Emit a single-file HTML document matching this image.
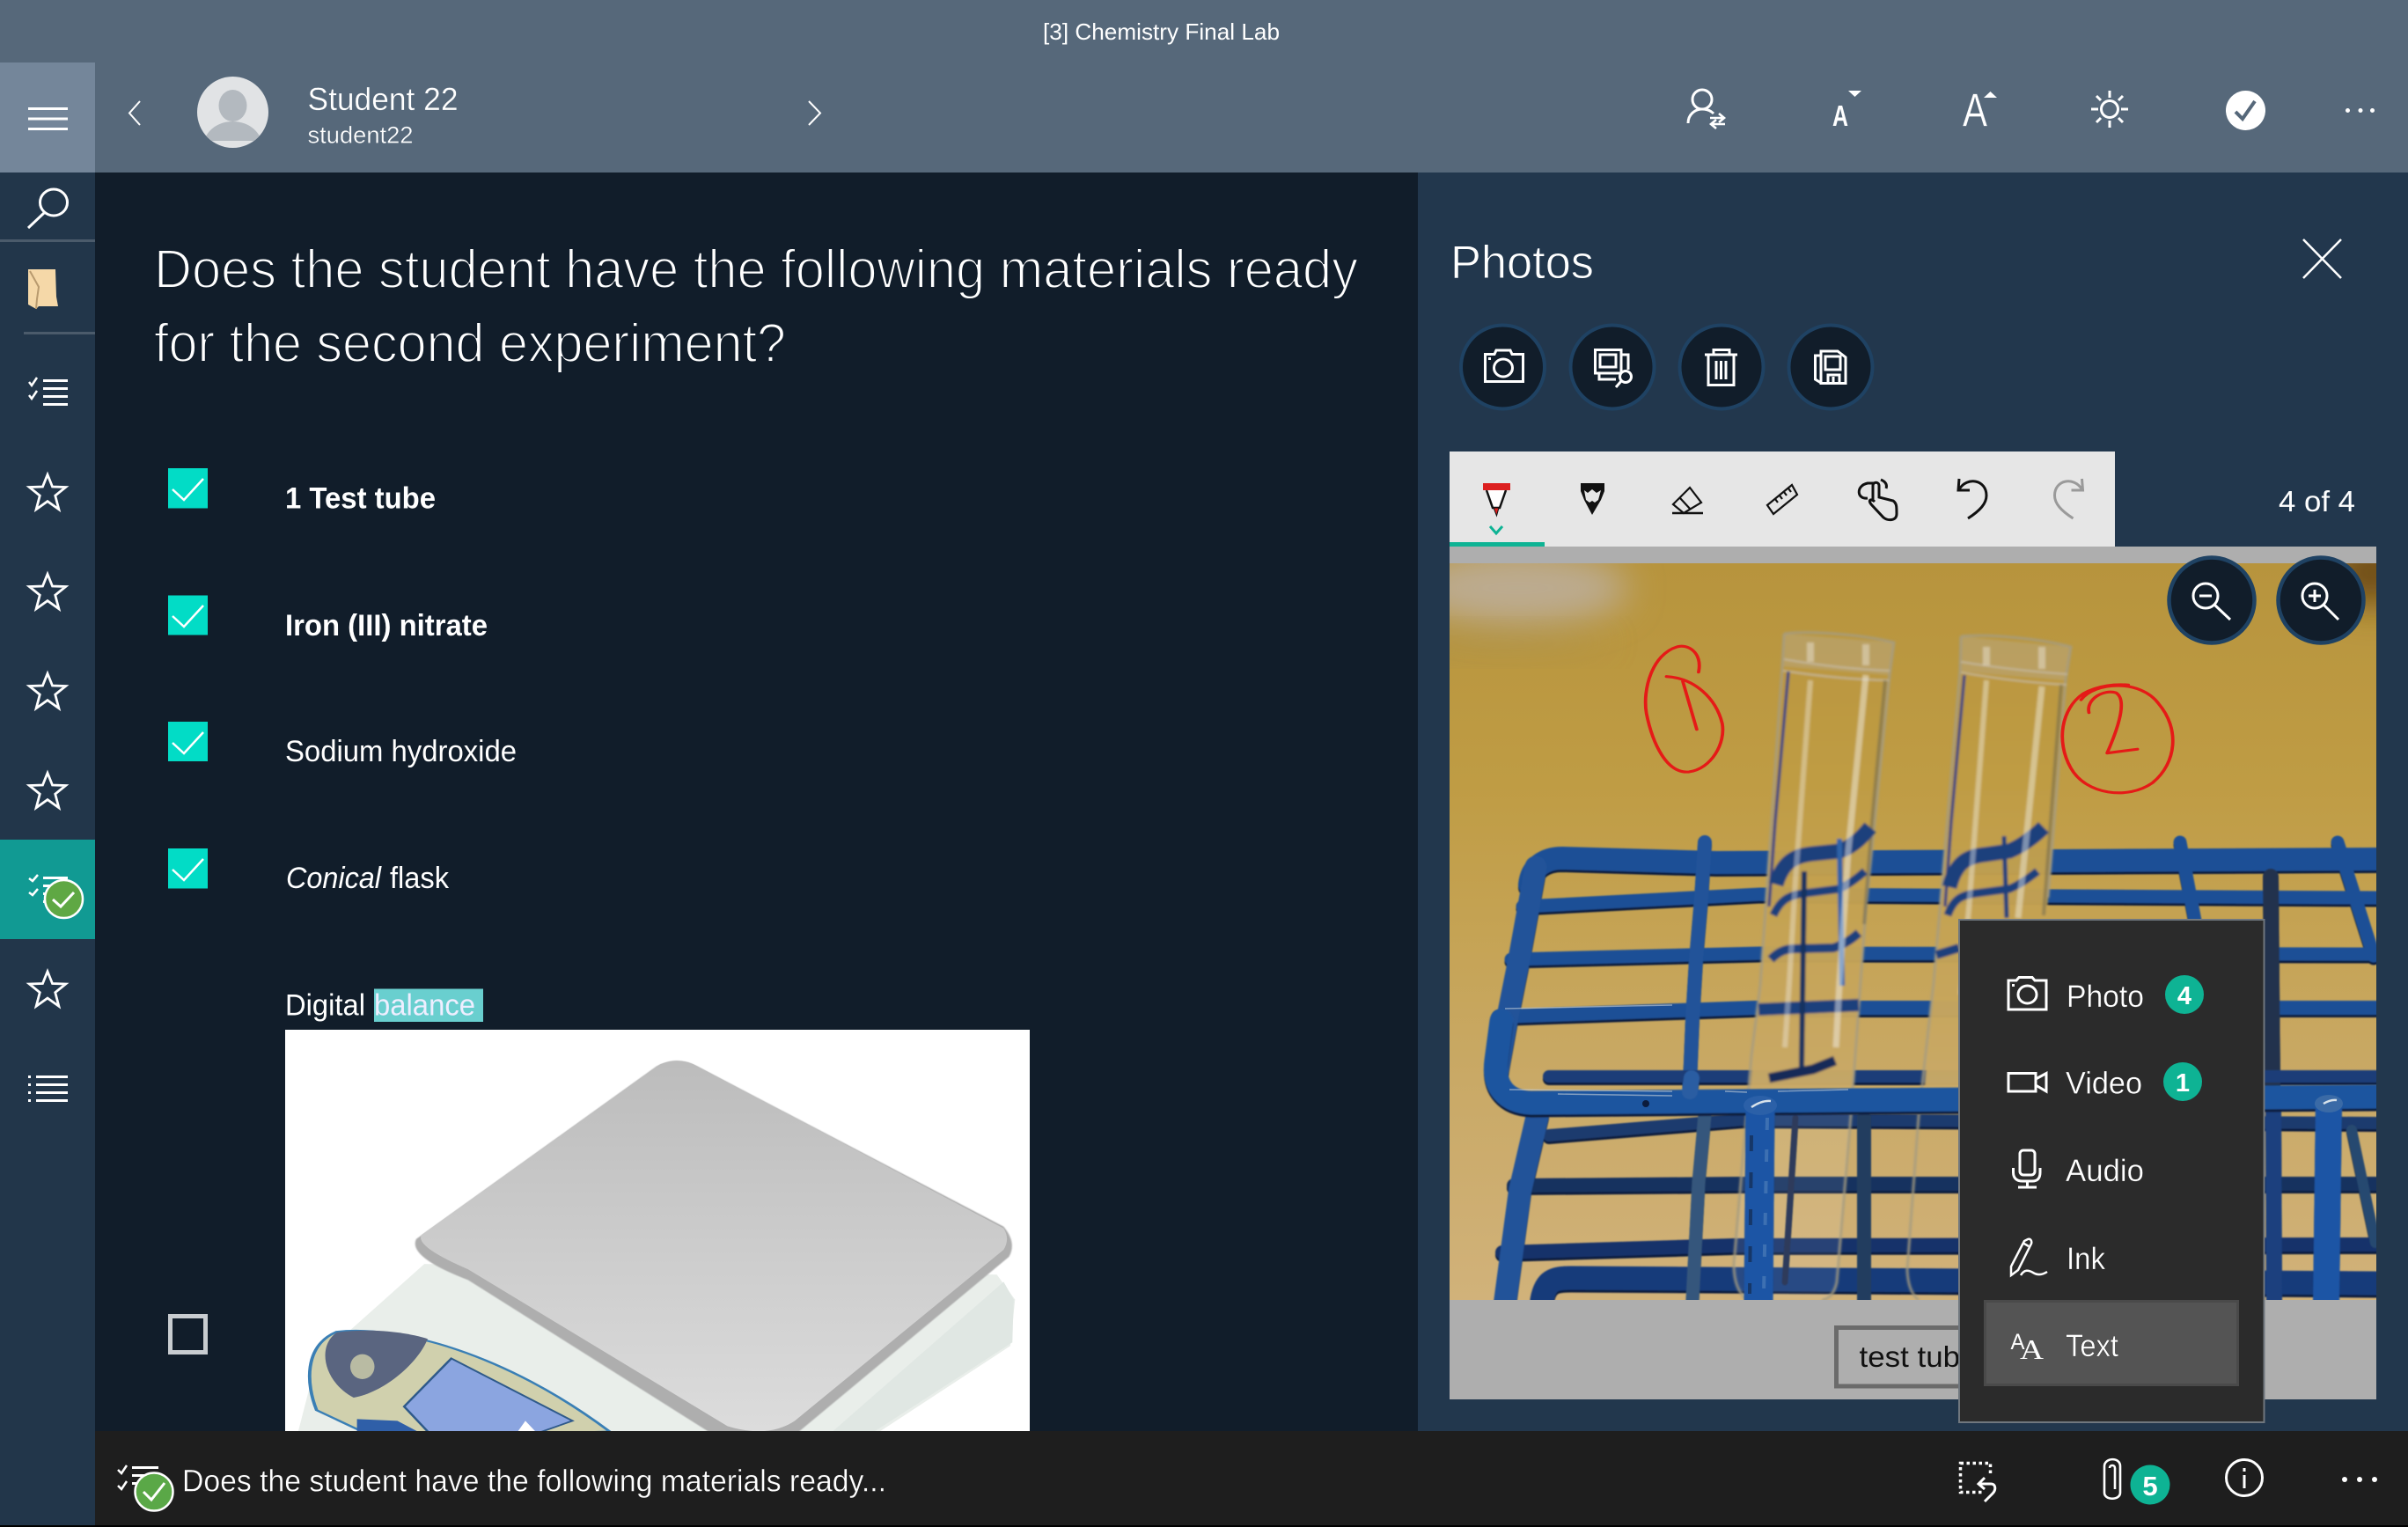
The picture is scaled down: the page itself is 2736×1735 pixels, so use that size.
<!DOCTYPE html>
<html lang="en"><head><meta charset="utf-8"><title>Chemistry Final Lab</title>
<style>
html,body{margin:0;padding:0;background:#000;width:2736px;height:1735px;overflow:hidden}
svg{display:block}
text{font-family:"Liberation Sans",sans-serif;fill:#fff}
.lm{stroke:#111d2a;stroke-width:1.9px}
.lp{stroke:#22374d;stroke-width:.9px}
.lh{stroke:#56687a;stroke-width:.35px}
.lb{stroke:#1e1e1e;stroke-width:.4px}
.lg{stroke:#2b2b2b;stroke-width:.35px}
.w{fill:none;stroke:#fff;stroke-width:3}
.k{fill:none;stroke:#111;stroke-width:3}
</style></head><body>
<svg xmlns="http://www.w3.org/2000/svg" width="2736" height="1735" viewBox="0 0 2736 1735">
<defs>
<clipPath id="ph"><rect x="1647" y="640" width="1053" height="837"/></clipPath>
<clipPath id="bal"><rect x="324" y="1170" width="846" height="456"/></clipPath>
<clipPath id="av"><circle cx="264.500" cy="127.500" r="40.500"/></clipPath>
<filter id="b20" x="-100%" y="-100%" width="300%" height="300%"><feGaussianBlur stdDeviation="20"/></filter>
<filter id="b1"><feGaussianBlur stdDeviation="1.300"/></filter>
<filter id="bs"><feGaussianBlur stdDeviation="1.200"/></filter>
<filter id="rail" x="-5%" y="-5%" width="110%" height="110%">
<feOffset in="SourceAlpha" dy="3" result="o"/>
<feFlood flood-color="#0c1c3c"/><feComposite in2="o" operator="in" result="d"/>
<feMerge result="m"><feMergeNode in="d"/><feMergeNode in="SourceGraphic"/></feMerge>
<feGaussianBlur in="m" stdDeviation=".8"/>
</filter>
<linearGradient id="wall" gradientUnits="userSpaceOnUse" x1="0" y1="640" x2="0" y2="1477"><stop offset="0" stop-color="#b7943d"/><stop offset=".3" stop-color="#bf9c44"/><stop offset=".5" stop-color="#c5a354"/><stop offset=".7" stop-color="#c9a966"/><stop offset="1" stop-color="#d1b27a"/></linearGradient>
<linearGradient id="plate" x1="0" y1="0" x2="0" y2="1"><stop offset="0" stop-color="#bcbcbc"/><stop offset="1" stop-color="#dcdcdc"/></linearGradient>
<path id="star" d="M0 -21.500 L6 -6.500 L22.500 -6 L9.500 4.500 L14 21.500 L0 11.500 L-14 21.500 L-9.500 4.500 L-22.500 -6 L-6 -6.500 Z" fill="none" stroke="#fff" stroke-width="3"/>
</defs>

<!-- base areas -->
<rect width="2736" height="1735" fill="#000"/>
<rect x="0" y="0" width="2736" height="196" fill="#56687a"/>
<rect x="0" y="71" width="108" height="125" fill="#74869a"/>
<rect x="0" y="196" width="108" height="1537" fill="#22364a"/>
<rect x="108" y="196" width="1503" height="1430" fill="#111d2a"/>
<rect x="1611" y="196" width="1125" height="1430" fill="#22374d"/>
<rect x="108" y="1626" width="2628" height="107" fill="#1e1e1e"/>

<!-- title bar -->
<text x="1185" y="45" font-size="26" textLength="269" lengthAdjust="spacingAndGlyphs">[3] Chemistry Final Lab</text>

<!-- header -->
<g fill="#fff"><rect x="32" y="122" width="45" height="3"/><rect x="32" y="133.500" width="45" height="3"/><rect x="32" y="145" width="45" height="3"/></g>
<path d="M159 115 L147 128.500 L159 142" fill="none" stroke="#fff" stroke-width="2"/>
<path d="M919 115 L932 128.500 L919 142" fill="none" stroke="#fff" stroke-width="2"/>
<circle cx="264.500" cy="127.500" r="40.500" fill="#e1e3e5"/>
<g clip-path="url(#av)"><ellipse cx="264.500" cy="120" rx="16" ry="18" fill="#b3b9bf"/><path d="M232 160 C236 146 250 138 264.500 138 C279 138 293 146 297 160 Z" fill="#b3b9bf"/></g>
<text class="lh" x="349.500" y="125" font-size="36" textLength="171" lengthAdjust="spacingAndGlyphs">Student 22</text>
<text class="lh" x="349.500" y="162.500" font-size="27" textLength="120" lengthAdjust="spacingAndGlyphs">student22</text>

<!-- header right icons -->
<ellipse cx="1934" cy="113" rx="11" ry="11" class="w"/>
<path d="M1918 140 C1918 130 1926 124 1934 124 C1940 124 1944 126 1947 129" class="w"/>
<path d="M1943 134 H1958 M1953 129 L1959 134 L1953 139 M1960 141 H1945 M1950 136 L1944 141 L1950 146" fill="none" stroke="#fff" stroke-width="2.600"/>
<text x="2082" y="143" font-size="33" font-weight="700" textLength="18" lengthAdjust="spacingAndGlyphs">A</text>
<path d="M2100 103 H2115 L2107.500 110 Z" fill="#fff"/>
<text class="lh" x="2230" y="143" font-size="53" textLength="28" lengthAdjust="spacingAndGlyphs">A</text>
<path d="M2254 111 H2269 L2261.500 104 Z" fill="#fff"/>
<circle cx="2397" cy="124" r="9.500" class="w"/>
<path d="M2397 103 V111 M2397 137 V145 M2376 124 H2384 M2410 124 H2418 M2382 109 L2387 114 M2407 134 L2412 139 M2412 109 L2407 114 M2387 134 L2382 139" class="w"/>
<circle cx="2551.500" cy="125.500" r="22.500" fill="#fff"/>
<path d="M2540 127 L2548 135 L2562 115" fill="none" stroke="#56687a" stroke-width="4"/>
<g fill="#fff"><circle cx="2667.500" cy="125.500" r="2.500"/><circle cx="2682" cy="125.500" r="2.500"/><circle cx="2695.500" cy="125.500" r="2.500"/></g>

<!-- sidebar -->
<ellipse cx="61" cy="230" rx="15.500" ry="15" class="w"/>
<path d="M50 242 L32 259" class="w"/>
<rect x="0" y="272" width="108" height="3" fill="#4b5b6b"/>
<path d="M32 306 H63 L64 337 L66 348 L44 348 L41 351 L32 346 Z" fill="#f5d8a8"/>
<path d="M34 308 L44 326 L42 340 L41 351" fill="none" stroke="#b89a6e" stroke-width="2"/>
<rect x="27" y="377" width="81" height="3" fill="#4b5b6b"/>
<g fill="none" stroke="#fff" stroke-width="2.500"><path d="M33 434 L36 438 L42 429 M33 449 L36 453 L42 444"/></g>
<g fill="#fff"><rect x="49" y="431" width="28" height="3"/><rect x="49" y="440" width="28" height="3"/><rect x="49" y="449" width="28" height="3"/><rect x="49" y="458" width="28" height="3"/></g>
<use href="#star" transform="translate(54 559) scale(.92)"/><use href="#star" transform="translate(54 672) scale(.92)"/><use href="#star" transform="translate(54 785) scale(.92)"/><use href="#star" transform="translate(54 898) scale(.92)"/>
<rect x="0" y="954" width="108" height="113" fill="#119a93"/>
<g fill="none" stroke="#fff" stroke-width="2.500"><path d="M33 998 L37 1001 L43 994 M33 1014 L37 1017 L43 1010"/></g>
<g fill="#fff"><rect x="49" y="996" width="28" height="3"/><rect x="49" y="1005" width="24" height="3"/><rect x="49" y="1014" width="20" height="3"/><rect x="49" y="1023" width="20" height="3"/></g>
<circle cx="72.500" cy="1021.500" r="21.500" fill="#5fa844" stroke="#fff" stroke-width="2.500"/>
<path d="M60 1022 L69 1030 L84 1014" fill="none" stroke="#fff" stroke-width="3"/>
<use href="#star" transform="translate(54 1123.500) scale(.92)"/>
<g fill="#fff"><rect x="32" y="1222" width="3" height="3"/><rect x="32" y="1231" width="3" height="3"/><rect x="32" y="1240" width="3" height="3"/><rect x="32" y="1249" width="3" height="3"/><rect x="41" y="1222" width="36" height="3"/><rect x="41" y="1231" width="36" height="3"/><rect x="41" y="1240" width="36" height="3"/><rect x="41" y="1249" width="36" height="3"/></g>

<!-- question -->
<text class="lm" x="175" y="327" font-size="62" textLength="1368" lengthAdjust="spacingAndGlyphs">Does the student have the following materials ready</text>
<text class="lm" x="175" y="411" font-size="62" textLength="718" lengthAdjust="spacingAndGlyphs">for the second experiment?</text>

<!-- checkboxes -->
<g fill="#02dcc6"><rect x="191" y="532" width="45" height="45.500"/><rect x="191" y="676.500" width="45" height="45"/><rect x="191" y="820" width="45" height="45"/><rect x="191" y="964" width="45" height="45.500"/></g>
<g fill="none" stroke="#fff" stroke-width="2.500"><path d="M196 556 L209 568 L231 544"/><path d="M196 700 L209 712 L231 688"/><path d="M196 844 L209 856 L231 832"/><path d="M196 988 L209 1000 L231 976"/></g>
<rect x="193.500" y="1495.500" width="40" height="41" fill="none" stroke="#c8ccd0" stroke-width="5"/>

<text x="324" y="577.500" font-size="34" font-weight="700" textLength="171" lengthAdjust="spacingAndGlyphs">1 Test tube</text>
<text x="324" y="722" font-size="34" font-weight="700" textLength="230" lengthAdjust="spacingAndGlyphs">Iron (III) nitrate</text>
<text x="324" y="865" font-size="34" textLength="263" lengthAdjust="spacingAndGlyphs">Sodium hydroxide</text>
<text x="325" y="1009" font-size="34" font-style="italic" textLength="108" lengthAdjust="spacingAndGlyphs">Conical</text>
<text x="443" y="1009" font-size="34" textLength="67" lengthAdjust="spacingAndGlyphs">flask</text>
<text x="324" y="1153.500" font-size="34" textLength="91" lengthAdjust="spacingAndGlyphs">Digital</text>
<rect x="425" y="1123.500" width="124" height="37.500" fill="#69cfcf"/>
<text x="425" y="1153.500" font-size="34" textLength="115" lengthAdjust="spacingAndGlyphs" style="fill:#eef">balance</text>

<!-- balance image -->
<rect x="324" y="1170" width="846" height="456" fill="#fff"/>
<g clip-path="url(#bal)"><g transform="translate(0 1100) scale(.7653 .405)">
<path d="M630 830 L470 1100 L440 1320 L1290 1320 L1500 1060 L1507 930 L1480 860 Z" fill="#e9eeea"/>
<path d="M1490 880 L1505 930 L1503 1050 L1290 1310 L1230 1310 Z" fill="#e0e7e3"/>
<path d="M500 1020 C590 1000 750 1080 905 1300 L560 1320 L470 1240 C455 1170 450 1060 500 1020 Z" fill="#d0d0ad" stroke="#3a7fb5" stroke-width="5"/>
<path d="M500 1022 C550 1010 600 1020 635 1040 C620 1110 570 1190 525 1205 C480 1160 470 1060 500 1022 Z" fill="#5a6580"/>
<ellipse cx="538" cy="1118" rx="18" ry="35" fill="#b9bba3"/>
<path d="M670 1095 L850 1270 L790 1310 L640 1310 L600 1230 Z" fill="#8ba5e0" stroke="#2f5a8a" stroke-width="4"/>
<path d="M530 1265 L590 1270 L640 1320 L530 1320 Z" fill="#2f5fa8"/>
<path d="M765 1310 L780 1270 L800 1310 Z" fill="#fff"/>
<path d="M618 760 L975 275 Q1005 245 1035 275 L1490 725 Q1510 770 1498 810 L1180 1310 L1060 1310 L695 875 Q605 810 618 760 Z" fill="#aeaeae" filter="url(#bs)"/>
<path d="M626 748 L980 270 Q1005 250 1030 270 L1490 730 Q1500 760 1490 790 L1180 1270 Q1140 1320 1080 1285 L695 845 Q615 780 626 748 Z" fill="url(#plate)"/>
</g></g>

<!-- bottom bar -->
<g fill="none" stroke="#fff" stroke-width="2.500"><path d="M134 1670 L138 1674 L144 1665 M134 1688 L138 1692 L144 1683"/></g>
<g fill="#fff"><rect x="150" y="1666" width="30" height="3"/><rect x="150" y="1675" width="26" height="3"/><rect x="150" y="1684" width="12" height="3"/></g>
<circle cx="175" cy="1695" r="21.500" fill="#5aa847" stroke="#fff" stroke-width="2.500"/>
<path d="M163 1695 L172 1704 L187 1685" fill="none" stroke="#fff" stroke-width="3"/>
<text class="lb" x="207" y="1694.500" font-size="35" textLength="800" lengthAdjust="spacingAndGlyphs">Does the student have the following materials ready...</text>
<rect x="2227.500" y="1662.500" width="34" height="33" fill="none" stroke="#fff" stroke-width="3.500" stroke-dasharray="3.500 3.500"/>
<rect x="2254" y="1675" width="16" height="24" fill="#1e1e1e"/>
<path d="M2249 1686 H2262 C2268 1686 2268 1693 2264 1697 L2255 1706 M2255 1679 L2248 1686 L2255 1692" fill="none" stroke="#fff" stroke-width="3"/>
<path d="M2391 1666 C2391 1656 2409 1655 2409 1666 V1696 C2409 1705 2391 1705 2391 1696 V1666 Z M2397 1668 C2397 1664 2403 1664 2403 1668 V1692" fill="none" stroke="#fff" stroke-width="2.600"/>
<circle cx="2443" cy="1687" r="22.500" fill="#0eb394"/>
<text x="2443" y="1699" font-size="31" font-weight="700" text-anchor="middle">5</text>
<circle cx="2550" cy="1679" r="20.500" class="w"/>
<rect x="2548.500" y="1676" width="3" height="15" fill="#fff"/><rect x="2548.500" y="1668" width="3" height="4" fill="#fff"/>
<g fill="#fff"><circle cx="2664" cy="1681" r="3"/><circle cx="2681" cy="1681" r="3"/><circle cx="2698" cy="1681" r="3"/></g>

<!-- photos panel -->
<text class="lp" x="1648" y="316" font-size="53" textLength="163" lengthAdjust="spacingAndGlyphs">Photos</text>
<path d="M2617 272 L2660 316 M2660 272 L2617 316" fill="none" stroke="#fff" stroke-width="2.500"/>
<g fill="#111d2a" stroke="#1f4263" stroke-width="4"><circle cx="1707.500" cy="417" r="47.500"/><circle cx="1832" cy="417" r="47.500"/><circle cx="1956" cy="417" r="47.500"/><circle cx="2080" cy="417" r="47.500"/></g>
<path d="M1687.500 402.500 H1698 L1700 398 H1716 L1718 402.500 H1730.500 V433.500 H1687.500 Z" class="w"/>
<ellipse cx="1708" cy="418" rx="10.500" ry="10" class="w"/><rect x="1691" y="406" width="3" height="3" fill="#fff"/>
<path d="M1812.500 397.500 H1842 V424 H1812.500 Z M1818 403 H1836 V417 H1818 Z M1842 403 H1850 V420 M1817 424 V431 H1836" class="w"/>
<circle cx="1847" cy="428" r="6.500" fill="#111d2a" stroke="#fff" stroke-width="3"/><path d="M1842 433 L1836 440" class="w"/>
<path d="M1937 403 H1974 M1947 403 V397.500 H1965 V403 M1941 403 V437.500 H1970 V403 M1950 410 V431 M1955.500 410 V431 M1961 410 V431" class="w"/>
<path d="M2069 403 V399 H2088 L2097 406 V435.500 H2069 Z M2069 404 H2062.500 V431 L2069 435 M2074 405 H2091 V420 H2074 Z M2077 435 V426 H2090 V435 M2083 428 V434" class="w"/>

<!-- photo area bands -->
<rect x="1647" y="621" width="1053" height="969" fill="#aeaeae"/>
<!-- toolbar -->
<rect x="1647" y="513" width="756" height="108" fill="#e6e6e6"/>
<rect x="1647" y="616" width="108" height="5" fill="#0eb394"/>
<path d="M1693 598 L1700 606 L1707 598" fill="none" stroke="#0eb394" stroke-width="3"/>
<path d="M1689 557 L1696 577 L1704 577 L1711 557" fill="#fff" stroke="#111" stroke-width="2.500"/>
<rect x="1685" y="549" width="31" height="8" fill="#dc1f1f"/>
<path d="M1697 577 H1703 L1700.500 586 Z" fill="#dc1f1f" stroke="#111" stroke-width="1"/>
<path d="M1796 549 H1823 V558 L1819 568 L1809 585 L1800 568 L1796 558 Z" fill="#111"/>
<path d="M1800 557 L1804 560 L1809 556 L1814 560 L1819 557 L1816 568 L1812 571 L1809 569 L1806 571 L1802 568 Z" fill="#e6e6e6"/>
<path d="M1920 554 L1933 571 L1913 583 L1901 573 Z M1909 566 L1921 579" fill="none" stroke="#111" stroke-width="2.200"/>
<path d="M1900 583 H1935" stroke="#111" stroke-width="2.500"/>
<path d="M2036 551 L2042 562 L2015 584 L2008 574 Z M2017 567 L2020 571 M2022 563 L2025 567 M2027 559 L2030 563 M2032 555 L2035 559" fill="none" stroke="#111" stroke-width="2.200"/>
<path d="M2122 566 C2110 568 2108 552 2122 549 H2130 M2137 545 C2144 548 2144 552 2143 555" class="k"/>
<path d="M2128 570 L2128 552 C2128 547 2135 547 2135 552 V565 L2151 569 C2155 572 2155 575 2155 584 C2155 592 2145 592 2140 588 L2126 573 C2122 568 2126 566 2130 570" class="k"/>
<path d="M2226 544 L2225 557 L2238 557 M2226 556 C2235 541 2257 545 2257 563 C2257 572 2250 580 2236 589" class="k"/>
<path d="M2226 544 L2225 557 L2238 557 M2226 556 C2235 541 2257 545 2257 563 C2257 572 2250 580 2236 589" fill="none" stroke="#9a9a9a" stroke-width="3" transform="matrix(-1 0 0 1 4591.500 0)"/>
<text x="2589" y="581" font-size="33" textLength="87" lengthAdjust="spacingAndGlyphs">4 of 4</text>

<!-- photo -->
<g clip-path="url(#ph)">
<rect x="1647" y="640" width="1053" height="837" fill="url(#wall)"/>
<ellipse cx="1725" cy="668" rx="125" ry="42" fill="#bcab90" filter="url(#b20)"/>
<ellipse cx="1700" cy="730" rx="130" ry="10" fill="#a08a4c" filter="url(#b20)" opacity=".5"/>
<ellipse cx="2695" cy="650" rx="50" ry="38" fill="#6f4d18" filter="url(#b20)"/>

<!-- rails behind the tubes -->
<g fill="none" stroke-linecap="round" stroke-linejoin="round" filter="url(#rail)">
<g stroke="#1e4f96">
<path d="M1738 1005 C1740 985 1755 975 1775 975 L1950 980 L2700 976" stroke-width="26"/>
<path d="M1730 1030 L2000 1016 L2700 1020" stroke-width="15"/>
<path d="M1717 1090 L2000 1083 L2700 1084" stroke-width="15"/>
<path d="M1703 1155 L1993 1145 L2700 1145" stroke-width="16"/>
<path d="M1937 957 L1933 1020 L1927 1090 L1923 1157 L1920 1230" stroke-width="16" stroke="#215299"/>
<path d="M2477 957 L2494 1046" stroke-width="15"/>
<path d="M2656 957 L2697 1086" stroke-width="15"/>
<path d="M2580 996 L2582 1230" stroke-width="18" stroke="#22324e"/>
<path d="M1760 1223 L2700 1223" stroke-width="14" stroke="#1a3d78"/>
<path d="M1760 1290 L1980 1272 L2700 1276" stroke-width="14" stroke="#1a3a6e"/>
<path d="M1720 1347 L1977 1345 L2700 1345" stroke-width="16" stroke="#16305e"/>
<path d="M1707 1423 L1970 1415 L2700 1414" stroke-width="16" stroke="#14306a"/>
<path d="M1752 1477 C1756 1455 1765 1452 1785 1452 L2700 1458" stroke-width="27" stroke="#173a7a"/>
<path d="M1937 1267 L1930 1343 L1923 1477" stroke-width="15" stroke="#34567c"/>
<path d="M2118 1270 L2118 1477" stroke-width="16" stroke="#243e5e"/>
<path d="M2040 1270 L2028 1457" stroke-width="7" stroke="#1a2c4e"/>
<path d="M2583 1260 L2584 1477" stroke-width="18" stroke="#1b3f7e"/>
<path d="M1747 1267 L1727 1353 L1710 1480" stroke-width="26" stroke="#215299"/>
<path d="M1745 985 L1735 1040 L1725 1095 L1712 1160 L1702 1215" stroke-width="25" stroke="#215299"/>
<path d="M2672 1284 L2699 1412" stroke-width="12" stroke="#27486f"/>
</g></g>

<!-- tubes -->
<g filter="url(#b1)" fill="none">
<path d="M2027 720 L2152 730 L2147 767 L2120 1033 L2105 1240 L1988 1240 L2000 1120 L2025 757 Z" fill="url(#wall)" fill-opacity=".97" stroke="none"/>
<path d="M2227 723 L2353 735 L2347 773 L2327 1020 L2310 1240 L2186 1240 L2197 1117 L2227 763 Z" fill="url(#wall)" fill-opacity=".97" stroke="none"/>
<path d="M2027 720 L2152 730 L2147 767 L2025 757 Z M2227 723 L2353 735 L2347 773 L2227 763 Z" fill="#b8b0a0" fill-opacity=".35" stroke="none"/>
<path d="M1988 1262 L2103 1262 L2087 1457 Q2083 1475 2070 1477 L1985 1477 Q1970 1465 1970 1437 Z" fill="#fff" fill-opacity=".08" stroke="none"/>
<g stroke="#a69c80" stroke-width="3" stroke-opacity=".85">
<path d="M2027 720 C2060 716 2120 722 2152 730 L2147 767 L2120 1033 L2103 1268 L2087 1457 Q2083 1475 2070 1477"/>
<path d="M2027 720 L2025 757 L2000 1120 L1990 1200 L1970 1437 Q1970 1465 1985 1477"/>
<path d="M2228 723 C2260 720 2320 726 2353 735 L2347 773 L2327 1020"/>
<path d="M2228 723 L2227 763 L2197 1117 L2180 1268 L2167 1443 Q2168 1468 2180 1477"/>
</g>
<g stroke="#c7bba5" stroke-width="2" stroke-opacity=".8">
<path d="M2027 749 Q2090 760 2147 762 M2026 762 Q2090 772 2146 773"/>
<path d="M2228 752 Q2290 762 2349 766 M2228 764 Q2290 775 2348 778"/>
</g>
<g stroke="#3a4480"><path d="M2032 763 L2017 933 L2010 1030" stroke-width="3.500"/><path d="M2232 767 L2217 933 L2210 1030" stroke-width="3.500"/></g>
<g stroke="#6e6850" stroke-opacity=".55"><path d="M2142 773 L2127 933 L2118 1050" stroke-width="4"/><path d="M2342 778 L2330 933 L2322 1040" stroke-width="4"/></g>
<!-- refraction bands -->
<g stroke="#1c3f7c" stroke-linecap="butt">
<path d="M2018 1005 C2026 978 2040 972 2060 970 L2090 967 C2105 962 2115 952 2125 940" stroke-width="17"/>
<path d="M2015 1040 C2024 1020 2035 1017 2050 1015 L2090 1010 C2100 1005 2110 998 2119 990" stroke-width="9"/>
<path d="M2012 1090 C2022 1080 2030 1078 2040 1078 L2083 1077 C2095 1073 2103 1068 2112 1060" stroke-width="10"/>
<path d="M1998 1147 L2112 1142" stroke-width="14"/>
<path d="M2010 1225 L2060 1215 L2085 1205" stroke-width="11" stroke="#182c58"/>
<path d="M2215 1008 C2222 980 2235 973 2255 971 L2283 967 C2295 962 2310 952 2322 940" stroke-width="17"/>
<path d="M2213 1040 C2220 1020 2230 1017 2245 1015 L2283 1010 C2295 1005 2305 998 2315 990" stroke-width="9"/>
<path d="M2200 1085 L2226 1077" stroke-width="10"/>
<path d="M2050 990 L2047 1213" stroke-width="6" stroke="#16305e"/>
<path d="M2277 950 L2280 1043" stroke-width="5"/>
<path d="M2090 953 L2093 1120" stroke-width="6" stroke="#2d62a8"/>
</g>
<!-- highlights -->
<g stroke="#f4f3ee" stroke-linecap="butt">
<path d="M2057 773 L2040 1000 L2033 1117 L2028 1190" stroke-width="6" stroke-opacity=".38"/>
<path d="M2120 767 L2100 967 L2090 1117 L2086 1190" stroke-width="7" stroke-opacity=".48"/>
<path d="M2257 773 L2237 1033 L2228 1130" stroke-width="6" stroke-opacity=".42"/>
<path d="M2320 780 L2293 1043" stroke-width="7" stroke-opacity=".45"/>
<path d="M2057 730 V752 M2120 732 V756 M2257 735 V756 M2320 735 V760" stroke-width="8" stroke-opacity=".4"/>
</g>
</g>

<!-- front rail & post -->
<g fill="none" stroke-linecap="round" stroke-linejoin="round" filter="url(#rail)">
<path d="M1706 1160 L1700 1205 C1696 1235 1712 1252 1740 1253 L2100 1250 L2700 1246" stroke-width="27" stroke="#1f549f"/>
<path d="M1922 1225 L1920 1240" stroke-width="18" stroke="#2a5da2"/>
<path d="M2000 1255 L1998 1480" stroke-width="33" stroke="#1f55a5" stroke-linecap="butt"/>
<path d="M2646 1252 L2643 1480" stroke-width="30" stroke="#1f55a5" stroke-linecap="butt"/>
</g>
<ellipse cx="2000" cy="1256" rx="19" ry="11" fill="#2b60a8"/>
<ellipse cx="2646" cy="1254" rx="16" ry="10" fill="#3a6aa6"/>
<g fill="none" stroke="#d8e2ea" stroke-width="2.500"><path d="M1990 1258 Q2002 1250 2012 1251"/><path d="M2640 1254 Q2648 1249 2655 1250"/></g>
<g fill="none" stroke="#c8d0d8" stroke-width="1.400" stroke-opacity=".6"><path d="M1715 1238 L1900 1240 M1770 1243 L1900 1245 M1960 1240 L1985 1241 M2020 1240 L2100 1238"/><path d="M1710 1146 L1900 1142"/></g>
<path d="M2008 1270 L2004 1470" fill="none" stroke="#5e8cc0" stroke-width="4" stroke-dasharray="14 22" stroke-opacity=".5"/>
<path d="M1990 1290 L1988 1470" fill="none" stroke="#12233f" stroke-width="4" stroke-dasharray="18 24" stroke-opacity=".6"/>
<circle cx="1870" cy="1254" r="4" fill="#0c1c3c"/>
</g>

<!-- ink -->
<g transform="translate(1640 620) scale(.6887 .5612)" fill="none" stroke="#e51a17" stroke-width="5.500" stroke-linecap="round" stroke-linejoin="round">
<path d="M421 256 C428 215 402 198 385 205 C345 220 328 290 335 340 C345 400 368 462 405 458 C442 452 466 400 460 360 C450 310 415 268 368 265"/>
<path d="M395 275 L418 372"/>
<path d="M1052 312 C1075 275 1150 270 1180 320 C1215 370 1210 440 1170 480 C1130 515 1060 505 1035 450 C1010 395 1020 330 1055 300 C1080 282 1110 280 1130 282"/>
<path d="M1065 338 C1060 310 1090 290 1110 298 C1125 310 1120 350 1095 420 L1145 412"/>
</g>

<!-- zoom buttons -->
<g fill="#111d2a" stroke="#1f4263" stroke-width="4.500"><circle cx="2513" cy="682" r="48.500"/><circle cx="2637" cy="682" r="48.500"/></g>
<circle cx="2506" cy="677" r="14" class="w"/><path d="M2516 687 L2534 704 M2499 677 H2513" class="w"/>
<circle cx="2630" cy="677" r="14" class="w"/><path d="M2640 687 L2657 704 M2623 677 H2637 M2630 670 V684" class="w"/>

<!-- input box -->
<rect x="2086.500" y="1508.500" width="170" height="66.500" fill="none" stroke="#6b6b6b" stroke-width="5"/>
<text x="2112.500" y="1553" font-size="33" textLength="134" lengthAdjust="spacingAndGlyphs" style="fill:#111">test tube</text>

<!-- popup -->
<rect x="2226" y="1045" width="346.500" height="571" fill="#2b2b2b" stroke="#70777e" stroke-width="2"/>
<rect x="2255.500" y="1478.500" width="287" height="95" fill="#545454" stroke="#4a4a4a" stroke-width="3"/>
<path d="M2282 1114 H2291 L2294 1110.500 H2309 L2312 1114 H2325 V1147 H2282 Z" class="w"/>
<ellipse cx="2303.500" cy="1130" rx="10.500" ry="10" class="w"/><rect x="2286" y="1118" width="3" height="3" fill="#fff"/>
<text class="lg" x="2348" y="1144" font-size="35" textLength="88" lengthAdjust="spacingAndGlyphs">Photo</text>
<circle cx="2482" cy="1130" r="22" fill="#0eb394"/>
<text x="2482" y="1141" font-size="29" font-weight="700" text-anchor="middle">4</text>
<path d="M2282 1219.500 H2313 V1240 H2282 Z M2313 1226 L2325 1219.500 V1240 L2313 1233" class="w"/>
<text class="lg" x="2347" y="1242.500" font-size="35" textLength="87" lengthAdjust="spacingAndGlyphs">Video</text>
<circle cx="2480" cy="1229" r="22" fill="#0eb394"/>
<text x="2480" y="1240" font-size="29" font-weight="700" text-anchor="middle">1</text>
<rect x="2295" y="1307" width="17" height="28" rx="4" class="w"/>
<path d="M2287.500 1327 V1332 C2287.500 1340 2293 1342 2298 1342 H2309 C2314 1342 2318 1340 2318 1332 V1327 M2303.500 1342 V1348 M2293 1349 H2314" class="w"/>
<text class="lg" x="2347" y="1342" font-size="35" textLength="89" lengthAdjust="spacingAndGlyphs">Audio</text>
<path d="M2304 1408 C2307 1407 2309 1410 2308 1413 L2293 1443 L2285 1449 L2285 1439 L2300 1410 Z M2298 1412 L2305 1416" fill="none" stroke="#fff" stroke-width="2.500"/>
<path d="M2296 1449 C2300 1442 2305 1443 2310 1446 C2315 1449 2320 1449 2326 1445" fill="none" stroke="#fff" stroke-width="2.500"/>
<text class="lg" x="2348" y="1442" font-size="35" textLength="44" lengthAdjust="spacingAndGlyphs">Ink</text>
<text x="2284.500" y="1533" font-size="25" textLength="16" lengthAdjust="spacingAndGlyphs">A</text>
<text x="2295" y="1544" font-size="32" textLength="27" lengthAdjust="spacingAndGlyphs" style="font-family:'Liberation Serif',serif">A</text>
<text class="lg" x="2347" y="1541" font-size="35" textLength="60" lengthAdjust="spacingAndGlyphs">Text</text>
</svg>
</body></html>
